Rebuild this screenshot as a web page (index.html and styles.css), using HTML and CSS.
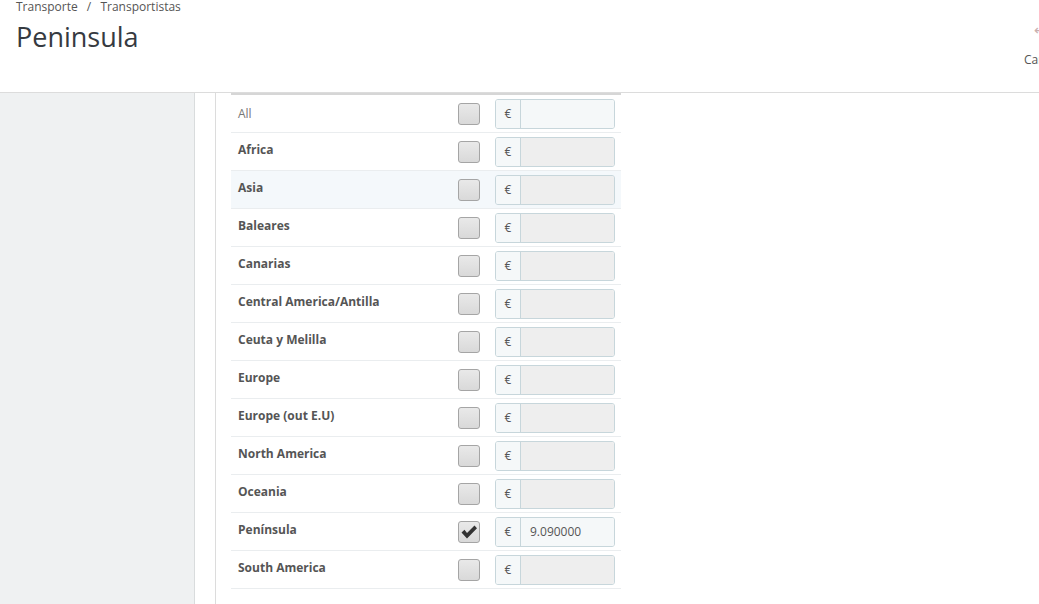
FILE: index.html
```html
<!DOCTYPE html>
<html>
<head>
	<meta charset="utf-8">
	<title>Peninsula</title>
	<link rel="stylesheet" href="styles.css">
</head>
<body>
	<div class="header">
		<div class="heading">
			<div class="breadcrumb">Transporte <span class="sep">/</span> Transportistas</div>
			<h1>Peninsula</h1>
		</div>
		<div class="toolbar">
			<span class="tb-icon">&#x21A9;</span>
			<span class="tb-text">Cancelar</span>
		</div>
	</div>

	<div class="main">
		<div class="sidebar"></div>
		<div class="gutter"></div>
		<div class="panel">
			<div class="zones">
				<div class="row">
					<div class="name all">All</div>
					<div class="check"></div>
					<div class="price"><span class="addon">€</span><span class="field open"></span></div>
				</div>
				<div class="row">
					<div class="name">Africa</div>
					<div class="check"></div>
					<div class="price"><span class="addon">€</span><span class="field"></span></div>
				</div>
				<div class="row hover">
					<div class="name">Asia</div>
					<div class="check"></div>
					<div class="price"><span class="addon">€</span><span class="field"></span></div>
				</div>
				<div class="row">
					<div class="name">Baleares</div>
					<div class="check"></div>
					<div class="price"><span class="addon">€</span><span class="field"></span></div>
				</div>
				<div class="row">
					<div class="name">Canarias</div>
					<div class="check"></div>
					<div class="price"><span class="addon">€</span><span class="field"></span></div>
				</div>
				<div class="row">
					<div class="name">Central America/Antilla</div>
					<div class="check"></div>
					<div class="price"><span class="addon">€</span><span class="field"></span></div>
				</div>
				<div class="row">
					<div class="name">Ceuta y Melilla</div>
					<div class="check"></div>
					<div class="price"><span class="addon">€</span><span class="field"></span></div>
				</div>
				<div class="row">
					<div class="name">Europe</div>
					<div class="check"></div>
					<div class="price"><span class="addon">€</span><span class="field"></span></div>
				</div>
				<div class="row">
					<div class="name">Europe (out E.U)</div>
					<div class="check"></div>
					<div class="price"><span class="addon">€</span><span class="field"></span></div>
				</div>
				<div class="row">
					<div class="name">North America</div>
					<div class="check"></div>
					<div class="price"><span class="addon">€</span><span class="field"></span></div>
				</div>
				<div class="row">
					<div class="name">Oceania</div>
					<div class="check"></div>
					<div class="price"><span class="addon">€</span><span class="field"></span></div>
				</div>
				<div class="row">
					<div class="name">Península</div>
					<div class="check checked">
						<svg width="18" height="16" viewBox="0 0 18 16"><path d="M1.5 8.5 L4.5 5.8 L7 9 L14.5 1.5 L17 4.2 L7 14.5 Z" fill="#333"/></svg>
					</div>
					<div class="price"><span class="addon">€</span><span class="field open">9.090000</span></div>
				</div>
				<div class="row">
					<div class="name">South America</div>
					<div class="check"></div>
					<div class="price"><span class="addon">€</span><span class="field"></span></div>
				</div>
			</div>
		</div>
	</div>
</body>
</html>
```

FILE: styles.css
```css
html, body{
	margin: 0;
	height: 100%;
	overflow: hidden;
}
body{
	font-family: "Open Sans", "Liberation Sans", sans-serif;
	color: #555;
	background: #fff;
}

.header{
	display: flex;
	justify-content: space-between;
	border-bottom: 1px solid #dcdcdc;
	box-sizing: border-box;
	height: 93px;
}
.heading{
	padding-left: 16px;
}
.breadcrumb{
	font-size: 12px;
	line-height: 14px;
	color: #555;
}
.breadcrumb .sep{
	margin: 0 6px;
}
h1{
	margin: 6px 0 0 0;
	font-size: 27px;
	font-weight: 400;
	line-height: 33px;
	color: #363a41;
}

/* toolbar is cut by the window edge, as in the original page */
.toolbar{
	width: 70px;
	margin-right: -53px;
	display: flex;
	flex-direction: column;
	align-items: flex-start;
	padding-top: 20px;
}
.tb-icon{
	font-size: 14px;
	color: #c8b0b0;
	margin-left: 12px;
	line-height: 20px;
}
.tb-text{
	font-size: 12px;
	color: #555;
	margin-top: 11px;
	margin-left: 2px;
}

.main{
	display: flex;
	height: 511px;
}
.sidebar{
	width: 194px;
	background: #eff1f2;
	border-right: 1px solid #d9dcdd;
}
.gutter{
	width: 20px;
	border-right: 1px solid #dcdcdc;
}
.panel{
	padding-left: 15px;
}

.zones{
	width: 390px;
	border-top: 2px solid #d6d6d6;
}
.row{
	display: grid;
	grid-template-columns: 227px 22px 120px;
	align-items: center;
	height: 37px;
	border-bottom: 1px solid #eaedef;
}
.row.hover{
	background: #f4f8fb;
}
.name{
	padding-left: 7px;
	font-size: 12px;
	font-weight: 700;
	color: #555;
	margin-top: -5px;
}
.name.all{
	font-weight: 400;
	color: #777;
	margin-top: 0;
}
.check{
	width: 20px;
	height: 20px;
	border: 1px solid #a5a5a5;
	border-radius: 3px;
	background: linear-gradient(#e9e9e9, #d9d9d9);
	display: flex;
	align-items: center;
	justify-content: center;
}
.price{
	display: flex;
	margin-left: 15px;
	width: 120px;
	height: 30px;
	box-sizing: border-box;
	border: 1px solid #c7d6db;
	border-radius: 3px;
	overflow: hidden;
}
.addon{
	width: 24px;
	background: #f5f8f9;
	border-right: 1px solid #c7d6db;
	font-size: 12px;
	color: #555;
	display: flex;
	align-items: center;
	justify-content: center;
}
.field{
	flex: 1;
	background: #eeeeee;
	font-size: 12px;
	color: #555;
	display: flex;
	align-items: center;
	padding-left: 9px;
}
.field.open{
	background: #f5f8f9;
}
```
